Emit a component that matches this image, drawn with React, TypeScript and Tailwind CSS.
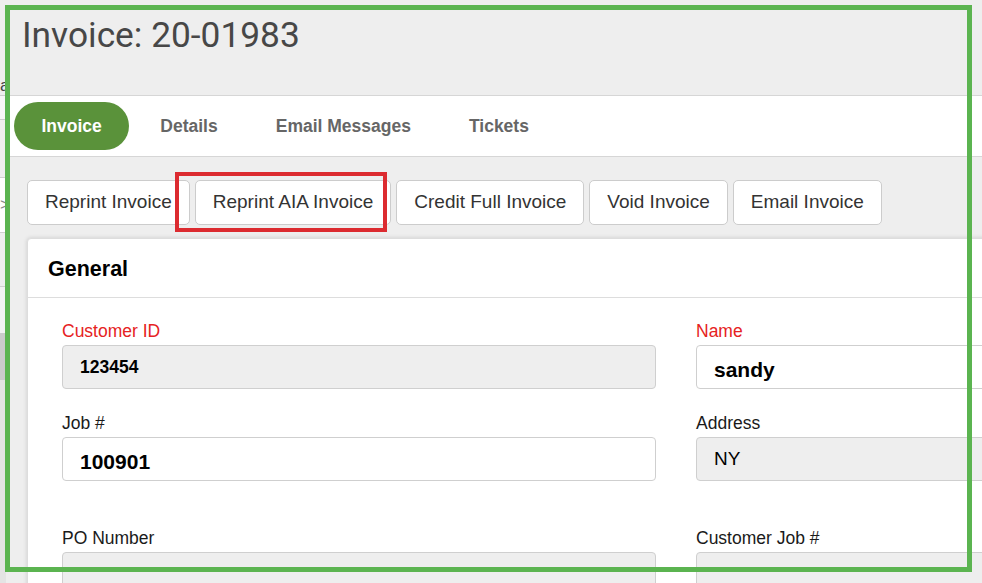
import React from "react";

type Field = {
  label: string;
  value?: string;
  required?: boolean;
  readOnly?: boolean;
  big?: boolean;
  bold?: boolean;
};

const tabs = ["Details", "Email Messages", "Tickets"];
const actions = [
  "Reprint Invoice",
  "Reprint AIA Invoice",
  "Credit Full Invoice",
  "Void Invoice",
  "Email Invoice",
];

const rows: { left: Field; right: Field; gap: string }[] = [
  {
    left: { label: "Customer ID", value: "123454", required: true, readOnly: true, bold: true },
    right: { label: "Name", value: "sandy", required: true, big: true, bold: true },
    gap: "mb-[24px]",
  },
  {
    left: { label: "Job #", value: "100901", big: true, bold: true },
    right: { label: "Address", value: "NY", readOnly: true },
    gap: "mb-[47px]",
  },
  {
    left: { label: "PO Number", readOnly: true },
    right: { label: "Customer Job #", readOnly: true },
    gap: "",
  },
];

const FieldBox = ({ label, value, required, readOnly, big, bold }: Field) => {
  return (
    <div className="flex flex-col">
      <label
        className={`text-[17.5px] leading-[20px] mb-[4px] ${
          required ? "text-[#e62222]" : "text-[#1a1a1a]"
        }`}
      >
        {label}
      </label>
      <div
        className={`h-[44px] rounded-[4px] border border-[#cfcfcf] px-[17px] flex items-center text-black ${
          readOnly ? "bg-[#eeeeee]" : "bg-white"
        } ${big ? "text-[21px] pt-[5px]" : bold ? "text-[17.5px]" : "text-[19px]"} ${
          bold ? "font-bold" : ""
        }`}
      >
        {value}
      </div>
    </div>
  );
};

const LeftStrip = () => {
  // bits of the page behind the highlighted panel
  return (
    <div className="w-[6px] shrink-0 flex flex-col overflow-hidden text-[#444] text-[17px]">
      <div className="h-[95px] bg-[#eeeeee] flex items-end leading-[18px]">a</div>
      <div className="h-[25px] bg-[#f7f7f7] border-y border-[#cccccc]" />
      <div className="h-[58px] bg-[#eeeeee] border-b border-[#d0d0d0]" />
      <div className="h-[55px] bg-white border-b border-[#d0d0d0] flex items-center text-[#888]">
        &gt;
      </div>
      <div className="h-[54px] bg-[#eeeeee] border-b border-[#d0d0d0]" />
      <div className="h-[46px] bg-[#f3f3f3]" />
      <div className="h-[47px] bg-[#cbcbcb]" />
      <div className="flex-1 bg-[#e4e4e4]" />
    </div>
  );
};

export default function App() {
  return (
    <div
      className="relative w-[982px] h-[583px] overflow-hidden bg-[#eeeeee] flex"
      style={{ fontFamily: '"Liberation Sans", Arial, sans-serif' }}
    >
      <LeftStrip />
      <div className="flex-1 flex flex-col min-w-0">
        <div className="h-[95px] pl-[16px] pt-[18px] shrink-0">
          <h1
            className="text-[35.3px] leading-none text-[#474747]"
            style={{ fontFamily: "Roboto, sans-serif" }}
          >
            Invoice: 20-01983
          </h1>
        </div>

        <div className="h-[62px] shrink-0 bg-white border-y border-[#d6d6d6] flex items-center pl-[8px]">
          <div className="h-[48px] px-[27.5px] rounded-full bg-[#5a923a] text-white font-bold text-[17.5px] flex items-center">
            Invoice
          </div>
          <div className="flex gap-[58px] pl-[31px] text-[#666666] font-bold text-[17.5px]">
            {tabs.map((t) => (
              <div key={t}>{t}</div>
            ))}
          </div>
        </div>

        <div className="pt-[23px] pl-[21px] flex flex-col">
          <div className="flex gap-[5px]">
            {actions.map((a) => (
              <button
                key={a}
                className="h-[45px] px-[17px] bg-white border border-[#cccccc] rounded-[5px] text-[19px] text-[#333333]"
              >
                {a}
              </button>
            ))}
          </div>

          <div className="mt-[13px] w-[1300px] bg-white border border-[#dddddd] rounded-tl-[4px] shadow-[0_0_4px_rgba(0,0,0,0.15)]">
            <div className="h-[59px] border-b border-[#dddddd] pl-[20px] pt-[2px] flex items-center">
              <h2 className="text-[21.5px] font-bold text-black">General</h2>
            </div>
            <div className="pt-[23px] px-[34px]">
              {rows.map((r, i) => (
                <div key={i} className={`grid grid-cols-[594px_594px] gap-x-[40px] ${r.gap}`}>
                  <FieldBox {...r.left} />
                  <FieldBox {...r.right} />
                </div>
              ))}
            </div>
          </div>
        </div>
      </div>

      {/* annotation overlays */}
      <div className="absolute left-[175px] top-[172px] w-[212px] h-[60px] border-[4px] border-[#dc2b30] pointer-events-none" />
      <div className="absolute left-[5px] top-[5px] w-[967px] h-[567px] border-[5px] border-[#5bb450] pointer-events-none" />
    </div>
  );
}
